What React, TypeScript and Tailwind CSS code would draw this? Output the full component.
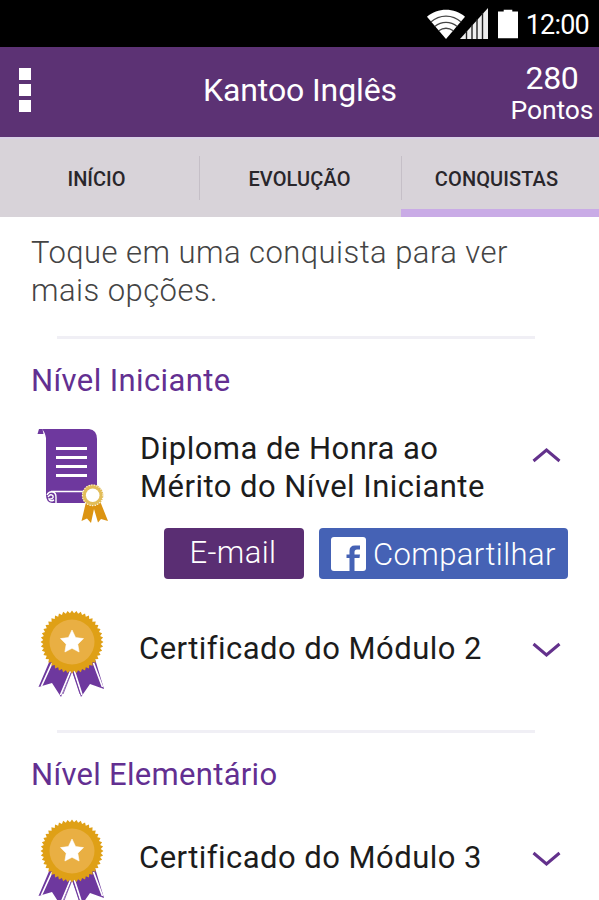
import { ReactNode } from 'react';

const PURPLE = '#6e389e';

function StatusBar() {
  return (
    <div className="flex h-[47px] items-start justify-end bg-black pr-[10px] text-white">
      <svg className="mt-[8px] h-[32px] w-[40px]" viewBox="0 0 41 32" fill="none">
        <path d="M1 8.500C12-1 29-1 40 8.500L20.500 31.500Z" fill="#fff" />
        <path d="M5 14C14 6 27 6 36 14M9 18.500C16 13 25 13 32 18.500M13 23C18 19.500 23 19.500 28 23" stroke="#444" strokeWidth="1.300" />
      </svg>
      <svg className="-ml-[6px] mt-[8px] h-[32px] w-[28px]" viewBox="0 0 28 32">
        <path d="M0 31L28 0V31Z" fill="#eee" />
        <path d="M6.500 23v8M12 17v14M17 11v20M22.500 5v26" stroke="#222" strokeWidth="1.400" />
      </svg>
      <svg className="ml-[10px] mt-[9px] h-[30px] w-[20px]" viewBox="0 0 21 30" fill="#fff">
        <path d="M6 0h9v2h6v28H0V2h6z" />
      </svg>
      <span className="ml-[8px] mt-[7px] text-[27px] leading-[36px] tracking-[-0.8px]">12:00</span>
    </div>
  );
}

function Header() {
  return (
    <header className="grid h-[90px] grid-cols-[184px_1fr_184px] items-center bg-[#5c3274] text-white">
      <div className="flex flex-col gap-[4px] pb-[4px] pl-[19px]">
        <span className="size-[12px] bg-white" />
        <span className="size-[12px] bg-white" />
        <span className="size-[12px] bg-white" />
      </div>
      <h1 className="whitespace-nowrap pb-[4px] pl-[1px] text-center text-[32px] leading-[38px] tracking-[-0.1px]">Kantoo Inglês</h1>
      <div className="flex w-[84px] flex-col items-center justify-self-end pr-[10px] pt-[3px]">
        <span className="text-[32px] leading-[32px] tracking-[-0.4px]">280</span>
        <span className="text-[26.500px] leading-[31px] tracking-[-0.1px]">Pontos</span>
      </div>
    </header>
  );
}

function Tabs() {
  return (
    <nav className="grid h-[80px] grid-cols-[200px_202px_197px] border-t-2 border-[#d8d0e6] bg-[#d8d3d9] text-[20px] font-medium text-[#29262b]">
      <div className="flex items-center justify-center pr-[7px] pt-[2px]">INÍCIO</div>
      <div className="-ml-px my-[17px] flex items-center justify-center border-x border-[#c5bfc7] pr-[2px] pt-[2px] tracking-[0.1px]">EVOLUÇÃO</div>
      <div className="-ml-px flex items-center justify-center border-b-8 border-[#c9abe6] pr-[7px] pt-[10px] tracking-[0.1px]">CONQUISTAS</div>
    </nav>
  );
}

function DiplomaIcon() {
  return (
    <svg className="h-[97px] w-[74px]" viewBox="0 0 74 97">
      <path d="M0.500 7L2 2H5.500L6.500 7Z" fill={PURPLE} />
      <path d="M5 2H52Q60 3 60 12V76H15Q9 75 9 68V11Q8 5 5 2Z" fill={PURPLE} />
      <path d="M19 21.500H50M19 30.500H50M19 39.500H50M19 48.500H50" stroke="#fff" strokeWidth="3" />
      <path d="M14 64.500H47" stroke="#fff" strokeWidth="1.500" />
      <path d="M10 68Q12 64 16 65Q19 66 19 70V76M11 70Q14 66 16 69Q17 72 12 72Q13 75 17 73" fill="none" stroke="#fff" strokeWidth="1.400" />
      <path d="M49 75L44.500 94L50 91.500L54 96L57 82L61 95.500L64 92L71 94L63 74Z" fill="#dc9412" />
      <circle cx="55.700" cy="68.300" r="10.700" fill="#e2bd59" />
      <circle cx="55.700" cy="68.300" r="10.300" fill="none" stroke="#fff" strokeWidth="1.200" strokeDasharray="1 1.600" />
      <circle cx="55.700" cy="68.300" r="6.800" fill="#fff" />
    </svg>
  );
}

const SEAL_POINTS = Array.from({ length: 88 }, (_, i) => {
  const radius = i % 2 ? 28.8 : 31.4;
  const angle = (i * Math.PI) / 44;
  return `${35 + radius * Math.sin(angle)},${32 - radius * Math.cos(angle)}`;
}).join(' ');

function MedalIcon() {
  return (
    <svg className="h-[88px] w-[70px]" viewBox="0 0 70 88">
      <path d="M13 50L1.500 77L15 73L24 87L35 61L44 87L53 74L67 79L58 49Z" fill={PURPLE} />
      <path d="M15 53L4.500 76M34 60L23.500 85M37 60L45 85M56.500 53L65.500 77" stroke="#fff" strokeWidth="1.700" />
      <polygon points="35,63 40,76 36,80 30,76" fill="#fff" />
      <path d="M35 61L26 84M35.500 61L43 84" stroke={PURPLE} strokeWidth="0.800" />
      <polygon points={SEAL_POINTS} fill="#dfa016" />
      <circle cx="35" cy="32" r="22.500" fill="#e9af43" />
      <path d="M35 20L38.600 27.600L46.500 28.600L40.800 34.200L42.100 42L35 38.300L27.900 42L29.200 34.200L23.500 28.600L31.400 27.600Z" fill="#fff" stroke="#fff" strokeWidth="0.600" />
    </svg>
  );
}

function Chevron({ up = false }: { up?: boolean }) {
  return (
    <svg className="h-[16px] w-[29px]" viewBox="0 0 29 16" fill="none" stroke="#63318c" strokeWidth="3">
      <path d={up ? 'M1.500 14L14.500 3L27.500 14' : 'M1.500 2L14.500 13L27.500 2'} />
    </svg>
  );
}

interface AwardRowProps {
  icon: ReactNode;
  children: ReactNode;
  open?: boolean;
}

function AwardRow({ icon, children, open }: AwardRowProps) {
  return (
    <div className="grid grid-cols-[102px_1fr_29px] items-start pl-[37px] pr-[38px] text-[31px] leading-[38px] tracking-[0.46px] text-[#1c1c1c]">
      {icon}
      <p className={open ? 'whitespace-nowrap pl-[1px] pt-[3px]' : 'whitespace-nowrap pt-[20px]'}>{children}</p>
      <div className={open ? 'pt-[20px]' : 'pt-[32px]'}>
        <Chevron up={open} />
      </div>
    </div>
  );
}

function Divider() {
  return <div className="ml-[57px] h-[3px] w-[478px] bg-[#f0eff5]" />;
}

export default function App() {
  return (
    <div className="h-[900px] w-[599px] overflow-hidden bg-white font-['Roboto',sans-serif]">
      <StatusBar />
      <Header />
      <Tabs />
      <main>
        <p className="whitespace-nowrap pl-[31px] pt-[17px] text-[31px] font-light leading-[38px] tracking-[0.46px] text-[#444]">
          Toque em uma conquista para ver
          <br />
          mais opções.
        </p>
        <div className="pt-[26px]"><Divider /></div>
        <h2 className="pl-[31px] pt-[23px] text-[31px] leading-[38px] tracking-[0.4px] text-[#632f91]">Nível Iniciante</h2>
        <div className="pt-[27px]">
          <AwardRow icon={<DiplomaIcon />} open>
            Diploma de Honra ao
            <br />
            Mérito do Nível Iniciante
          </AwardRow>
        </div>
        <div className="flex gap-[15px] pl-[164px] pt-[4px] text-[31px] font-light leading-[38px] tracking-[0.4px] text-white">
          <button className="h-[51px] w-[140px] rounded-[4px] bg-[#5a2e73] pb-[2px] pr-[2px]">E-mail</button>
          <button className="flex h-[51px] w-[249px] items-center rounded-[4px] bg-[#4562b5] pl-[12px]">
            <svg className="mr-[7px] h-[34px] w-[35px] shrink-0" viewBox="0 0 35 34">
              <rect width="35" height="34" rx="3" fill="#fff" />
              <path d="M18.500 34V21H15.500V17.500H18.500V14Q18.500 8.500 24 8.500H29V12.500H26Q23.500 12.500 23.500 15V17.500H29L28.500 21H23.500V34Z" fill="#4562b5" />
            </svg>
            <span className="pt-[2px]">Compartilhar</span>
          </button>
        </div>
        <div className="pt-[31px]">
          <AwardRow icon={<MedalIcon />}>Certificado do Módulo 2</AwardRow>
        </div>
        <div className="pt-[32px]"><Divider /></div>
        <h2 className="pl-[31px] pt-[23px] text-[31px] leading-[38px] tracking-[0.3px] text-[#632f91]">Nível Elementário</h2>
        <div className="pt-[25px]">
          <AwardRow icon={<MedalIcon />}>Certificado do Módulo 3</AwardRow>
        </div>
      </main>
    </div>
  );
}
